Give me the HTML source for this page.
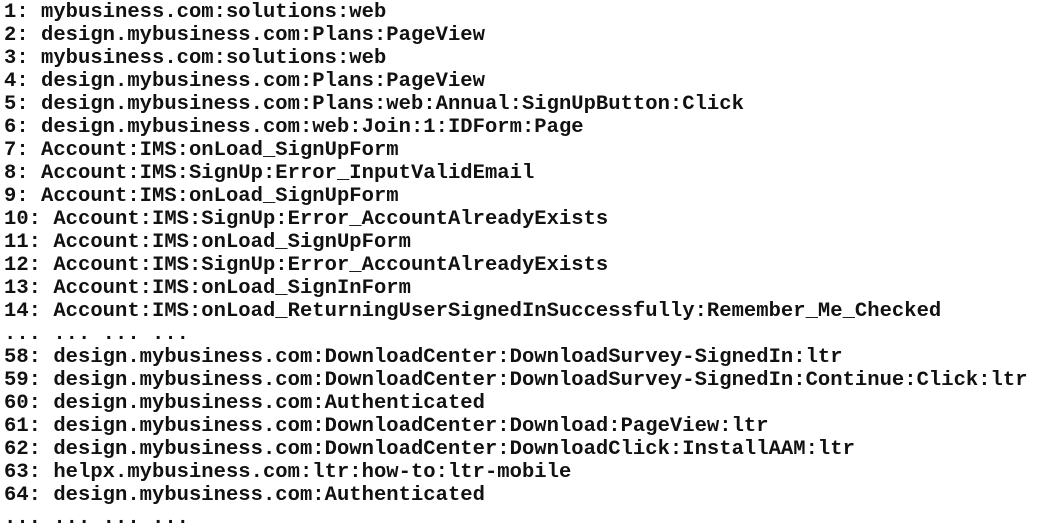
<!DOCTYPE html>
<html><head><style>
body{margin:0;background:#fff;width:1037px;height:532px;overflow:hidden}
pre{margin:0;padding:1px 0 0 4px;font-family:"Liberation Mono",monospace;font-weight:bold;font-size:20.5px;letter-spacing:0.03px;line-height:23px;color:#111}
</style></head><body><pre>1: mybusiness.com:solutions:web
2: design.mybusiness.com:Plans:PageView
3: mybusiness.com:solutions:web
4: design.mybusiness.com:Plans:PageView
5: design.mybusiness.com:Plans:web:Annual:SignUpButton:Click
6: design.mybusiness.com:web:Join:1:IDForm:Page
7: Account:IMS:onLoad_SignUpForm
8: Account:IMS:SignUp:Error_InputValidEmail
9: Account:IMS:onLoad_SignUpForm
10: Account:IMS:SignUp:Error_AccountAlreadyExists
11: Account:IMS:onLoad_SignUpForm
12: Account:IMS:SignUp:Error_AccountAlreadyExists
13: Account:IMS:onLoad_SignInForm
14: Account:IMS:onLoad_ReturningUserSignedInSuccessfully:Remember_Me_Checked
... ... ... ...
58: design.mybusiness.com:DownloadCenter:DownloadSurvey-SignedIn:ltr
59: design.mybusiness.com:DownloadCenter:DownloadSurvey-SignedIn:Continue:Click:ltr
60: design.mybusiness.com:Authenticated
61: design.mybusiness.com:DownloadCenter:Download:PageView:ltr
62: design.mybusiness.com:DownloadCenter:DownloadClick:InstallAAM:ltr
63: helpx.mybusiness.com:ltr:how-to:ltr-mobile
64: design.mybusiness.com:Authenticated
... ... ... ...</pre></body></html>
